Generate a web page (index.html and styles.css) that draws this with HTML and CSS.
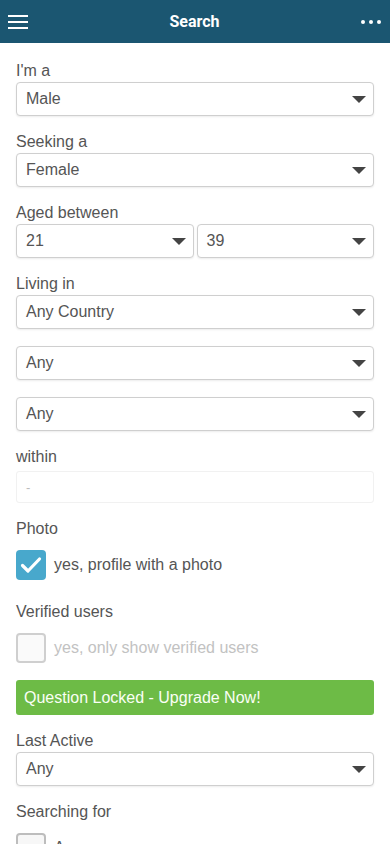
FILE: index.html
```html
<!DOCTYPE html>
<html>
<head>
<meta charset="utf-8">
<link rel="stylesheet" href="styles.css">
</head>
<body>
<header class="topbar">
  <span class="burger"><i></i><i></i><i></i></span>
  <h1 class="title">Search</h1>
  <span class="dots"><i></i><i></i><i></i></span>
</header>
<main class="form">
  <div class="group">
    <div class="label">I'm a</div>
    <div class="select"><span>Male</span><b class="arrow"></b></div>
  </div>
  <div class="group">
    <div class="label">Seeking a</div>
    <div class="select"><span>Female</span><b class="arrow"></b></div>
  </div>
  <div class="group">
    <div class="label">Aged between</div>
    <div class="pair">
      <div class="select"><span>21</span><b class="arrow"></b></div>
      <div class="select"><span>39</span><b class="arrow"></b></div>
    </div>
  </div>
  <div class="group">
    <div class="label">Living in</div>
    <div class="select"><span>Any Country</span><b class="arrow"></b></div>
  </div>
  <div class="group">
    <div class="select"><span>Any</span><b class="arrow"></b></div>
  </div>
  <div class="group">
    <div class="select"><span>Any</span><b class="arrow"></b></div>
  </div>
  <div class="group">
    <div class="label">within</div>
    <div class="input"><span>-</span></div>
  </div>
  <div class="group">
    <div class="label">Photo</div>
    <div class="check-row">
      <span class="box checked"><svg width="22" height="18" viewBox="0 0 22 18"><path d="M2.5 9.5 L8 15 L19.5 3" fill="none" stroke="#fff" stroke-width="3.2" stroke-linecap="round" stroke-linejoin="round"/></svg></span>
      <span class="check-text">yes, profile with a photo</span>
    </div>
  </div>
  <div class="group">
    <div class="label">Verified users</div>
    <div class="check-row">
      <span class="box disabled"></span>
      <span class="check-text muted">yes, only show verified users</span>
    </div>
  </div>
  <div class="group">
    <div class="locked">Question Locked - Upgrade Now!</div>
  </div>
  <div class="group">
    <div class="label">Last Active</div>
    <div class="select"><span>Any</span><b class="arrow"></b></div>
  </div>
  <div class="group">
    <div class="label">Searching for</div>
    <div class="check-row">
      <span class="box"></span>
      <span class="check-text">Any</span>
    </div>
  </div>
</main>
</body>
</html>
```
FILE: styles.css
```css
html, body {
  margin: 0;
  padding: 0;
  background: #fff;
  height: 844px;
  overflow: hidden;
}
body {
  font-family: "Liberation Sans", Arial, sans-serif;
  color: #555;
}
.topbar {
  height: 43px;
  background: #1b5671;
  display: flex;
  align-items: center;
  justify-content: space-between;
  padding: 0 9px 0 8px;
  box-sizing: border-box;
}
.title {
  margin: 0;
  font-family: Roboto, "Liberation Sans", sans-serif;
  font-weight: 700;
  font-size: 16px;
  color: #fff;
}
.burger {
  width: 20px;
  display: flex;
  flex-direction: column;
  gap: 4px;
  margin-top: 1px;
}
.burger i {
  display: block;
  height: 2px;
  background: #fff;
}
.dots {
  display: flex;
  gap: 4px;
  width: 20px;
}
.dots i {
  display: block;
  width: 4px;
  height: 4px;
  border-radius: 50%;
  background: #fff;
}
.form {
  padding: 19px 16px 0 16px;
  display: flex;
  flex-direction: column;
  gap: 17px;
}
.group {
  display: flex;
  flex-direction: column;
}
.label {
  font-size: 16px;
  line-height: 18px;
  color: #555;
  margin-bottom: 2px;
}
.select {
  height: 34px;
  border: 1px solid #cfcfcf;
  border-radius: 4px;
  box-shadow: 0 1px 2px rgba(0,0,0,0.08);
  box-sizing: border-box;
  display: flex;
  align-items: center;
  justify-content: space-between;
  padding: 0 7px 0 9px;
  font-size: 16px;
  color: #555;
  background: #fff;
}
.arrow {
  width: 0;
  height: 0;
  border-left: 7px solid transparent;
  border-right: 7px solid transparent;
  border-top: 7px solid #444;
  margin-top: 1px;
}
.pair {
  display: grid;
  grid-template-columns: 1fr 1fr;
  gap: 3px;
}
.input {
  height: 32px;
  margin-top: 3px;
  border: 1px solid #f1f1f1;
  border-radius: 3px;
  box-sizing: border-box;
  display: flex;
  align-items: center;
  padding: 0 9px;
  font-size: 13px;
  color: #bbb;
}
.check-row {
  display: flex;
  align-items: center;
  gap: 8px;
  margin-top: 10px;
  margin-bottom: 6px;
  height: 30px;
}
.box {
  width: 30px;
  height: 30px;
  box-sizing: border-box;
  border: 2px solid #bdbdbd;
  border-radius: 4px;
  background: #f7f7f7;
  display: flex;
  align-items: center;
  justify-content: center;
  flex: none;
}
.box.checked {
  background: #48a8cc;
  border: none;
}
.box.disabled {
  border-color: #cfcfcf;
  background: #fafafa;
}
.check-text {
  font-size: 16px;
  color: #555;
}
.check-text.muted {
  color: #c2c2c2;
}
.group:nth-last-child(3) {
  margin-top: -6px;
}
.locked {
  height: 35px;
  background: #6dbb46;
  border-radius: 3px;
  color: #fafff5;
  font-size: 16px;
  display: flex;
  align-items: center;
  padding: 0 8px;
}
```
